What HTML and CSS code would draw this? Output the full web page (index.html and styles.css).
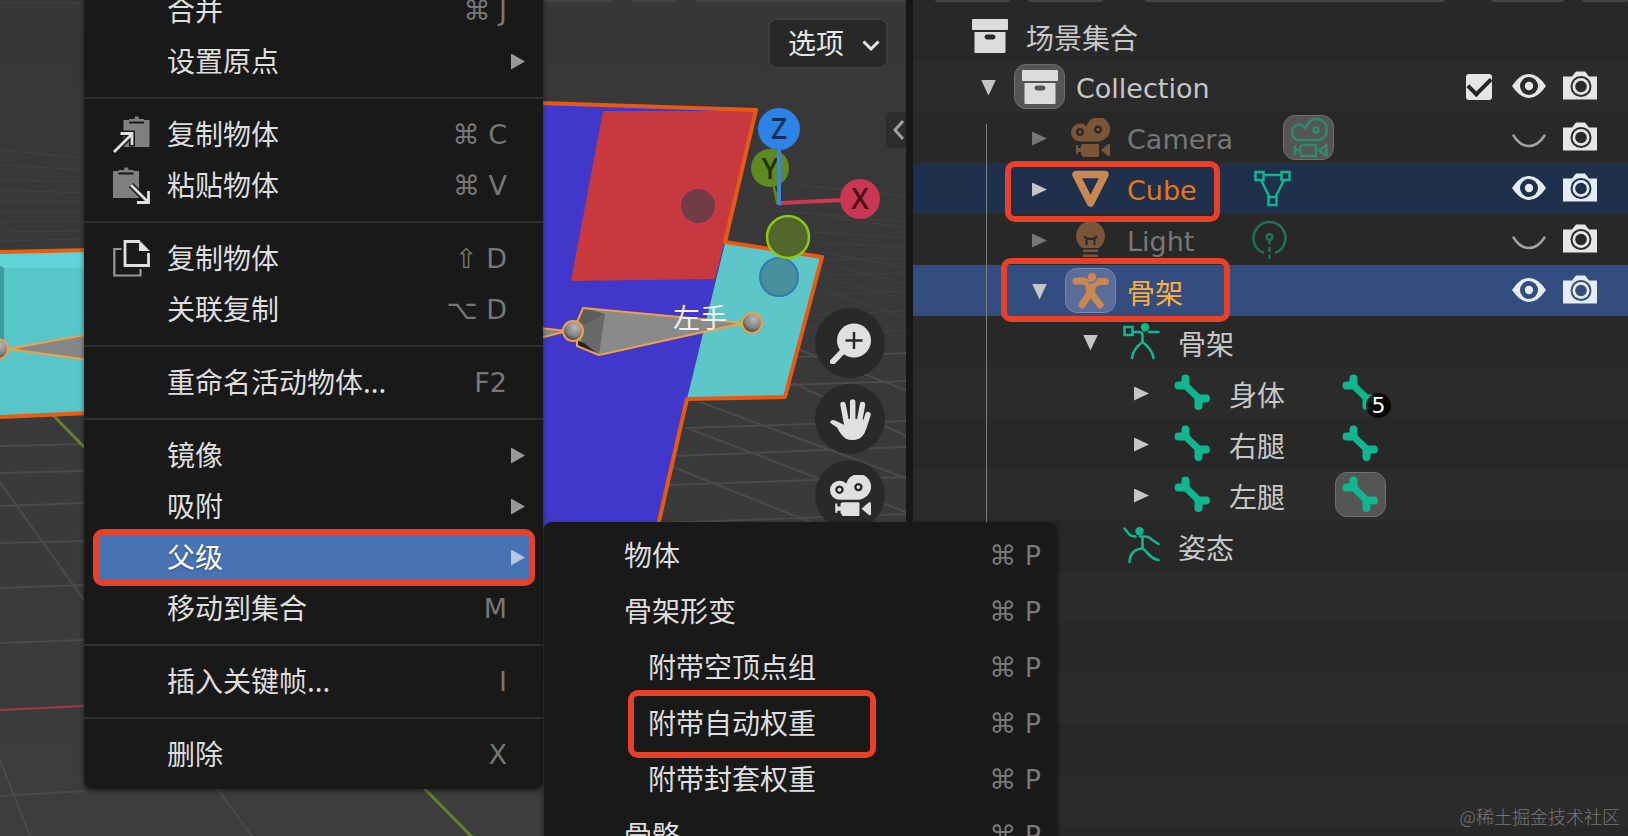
FILE: index.html
```html
<!DOCTYPE html>
<html lang="zh-CN">
<head>
<meta charset="utf-8">
<meta name="viewport" content="width=device-width, initial-scale=1">
<title>Blender</title>
<link rel="stylesheet" href="styles.css">
</head>
<body>
<svg class="sprite" aria-hidden="true">
  <symbol id="i-box" viewBox="0 0 36 34">
    <rect width="36" height="11" rx="1"/>
    <path fill-rule="evenodd" d="M2.500 13H33.500V33a1 1 0 0 1-1 1H3.500a1 1 0 0 1-1-1ZM15 15.500a2.400 2.400 0 0 0 0 5h6a2.400 2.400 0 0 0 0-5Z"/>
  </symbol>
  <symbol id="i-camera" viewBox="0 0 39 39">
    <path fill-rule="evenodd" d="M9 5.500a8.500 8.500 0 0 1 6.500 2.500A12 12 0 1 1 31 22.500Q29 23.500 27 23.500H9A9 9 0 0 1 9 5.500ZM9 10a4 4 0 1 0 .01 0ZM27 7.500a4 4 0 1 0 .01 0Z"/>
    <circle cx="9" cy="14" r="1.800"/><circle cx="27" cy="11.500" r="1.800"/>
    <path d="M12 26H27a1 1 0 0 1 1 1V38a1 1 0 0 1-1 1H12L10 36V34H7V36H5V27H7V30H10V27ZM30 32L37 26Q39 25.500 39 27V37Q39 39 37 38Z"/>
  </symbol>
  <symbol id="i-camera-line" viewBox="0 0 39 39">
    <g fill="none" stroke="currentColor" stroke-width="2.500" stroke-linejoin="round">
      <path d="M9 6.500Q13 6 16 10Q18 9 18 7A10.500 10.500 0 1 1 29 22H9A8 8 0 0 1 9 6.500Z"/>
      <circle cx="27" cy="12" r="2.500"/>
      <path d="M13 27H27V38H13L11 35V30ZM30 32.500L37.500 27V38ZM6 27V37M6 32H11"/>
      <path d="M9 15.500L11 13.500" stroke-width="1"/>
    </g>
  </symbol>
  <symbol id="i-mesh" viewBox="0 0 37 37">
    <path d="M4 4.500H33L18.500 33Z" fill="none" stroke="currentColor" stroke-width="7.500" stroke-linejoin="round"/>
  </symbol>
  <symbol id="i-mesh-line" viewBox="0 0 37 37">
    <g fill="none" stroke="currentColor" stroke-width="2.500">
      <path d="M1.500 2H9.500V10H1.500ZM27.500 2H35.500V10H27.500ZM14.500 27H22.500V35H14.500ZM10 5H27M7 10L15.500 27M30 10L21.500 27"/>
    </g>
  </symbol>
  <symbol id="i-bulb" viewBox="0 0 37 37">
    <path d="M18.500 0A15 15 0 0 1 27 27H10A15 15 0 0 1 18.500 0Z"/>
    <path d="M12 15Q14 18 18.500 18Q23 18 25 15M14.500 18V24M22.500 18V24" fill="none" stroke="var(--row)" stroke-width="2"/>
    <path d="M11 28.500H26V31H11ZM11 33.500H26V36H11Z"/>
  </symbol>
  <symbol id="i-light-line" viewBox="0 0 37 39">
    <g fill="none" stroke="currentColor" stroke-width="2.500">
      <path d="M13 33A16 16 0 1 1 24 33"/><circle cx="18.500" cy="17" r="2.800"/>
      <path d="M18.500 21V24M18.500 27V32M18.500 34.500V39"/>
    </g>
  </symbol>
  <symbol id="i-man" viewBox="0 0 37 37">
    <circle cx="20" cy="5" r="4.200"/>
    <g fill="none" stroke="currentColor" stroke-width="7" stroke-linecap="round" stroke-linejoin="round">
      <path d="M4 9H12L16 11M24.500 11L27 9.500H33.500M18.500 13V20L10 33M18.500 20L28 33"/>
    </g>
    <path d="M13 8L25 9L23 20H14Z"/>
    <path d="M16 10.500Q22 12 24.500 7" fill="none" stroke="#5e6f9e" stroke-width="1.500"/>
  </symbol>
  <symbol id="i-man-line" viewBox="0 0 37 37">
    <circle cx="22" cy="4.200" r="4.200"/>
    <g fill="none" stroke="currentColor" stroke-width="2.600" stroke-linecap="round">
      <path d="M1.500 4H9.500V12H1.500ZM10 9H17Q19.500 9.500 19.500 12V19Q10 26 9 35M19.500 19Q29 26 30.500 35M26 9H35.500"/>
    </g>
  </symbol>
  <symbol id="i-pose" viewBox="0 0 37 37">
    <circle cx="16.500" cy="4.200" r="4.200"/>
    <g fill="none" stroke="currentColor" stroke-width="2.600" stroke-linecap="round">
      <path d="M1.500 1.500L6 7Q8 9.500 12.500 9.500M17 9.500H22Q26 9.500 28 12L35.500 17M19.500 10V21M19.500 21.500C10 22 7 28 6.500 35M19.500 21.500C24 23 25 31 35.500 33"/>
    </g>
  </symbol>
  <symbol id="i-bone" viewBox="0 0 37 37">
    <g fill="none" stroke="currentColor" stroke-linecap="round">
      <path d="M11.500 4.500V10M4.500 11.500H10M24.500 32V26M32 24.500H26" stroke-width="8"/>
      <path d="M11 11L26 25.500" stroke-width="7"/>
    </g>
  </symbol>
  <symbol id="i-eye" viewBox="0 0 34 24">
    <path d="M0 12Q8 0 17 0T34 12Q26 24 17 24T0 12Z"/>
    <circle cx="17" cy="12" r="9" fill="var(--row)"/><circle cx="17" cy="12" r="4.200"/>
  </symbol>
  <symbol id="i-closed" viewBox="0 0 34 14">
    <path d="M1.500 1.500Q8 12 17 12T32.500 1.500" fill="none" stroke="#a2a2a2" stroke-width="2.500" stroke-linecap="round"/>
  </symbol>
  <symbol id="i-photo" viewBox="0 0 34 29">
    <path d="M0 5.500H9L13 .500H22L26 5.500H34V28.500H0Z"/>
    <circle cx="18" cy="15.500" r="10.500" fill="var(--row)"/><circle cx="18" cy="15.500" r="8.500"/>
    <circle cx="18" cy="15.500" r="5.800" fill="var(--row)"/>
  </symbol>
  <symbol id="i-copy" viewBox="0 0 37 37">
    <path d="M10.500 4H16V7.500H31V4H36.500V31H10.500ZM16 3H21.500L22 .500H25.500L26 3H31V5.500H16Z" fill="#808080"/>
    <path d="M1 36L18 19M6 17.500H19V30.500" fill="none" stroke="#191919" stroke-width="6"/>
    <path d="M1 36L18 19M7.500 17.500H19V29" fill="none" stroke="#e0e0e0" stroke-width="2.800"/>
  </symbol>
  <symbol id="i-paste" viewBox="0 0 37 37">
    <path d="M0 4H5.500V7.500H20.500V4H26V31H0ZM5.500 3H11L11.500 .500H15L15.500 3H20.500V5.500H5.500Z" fill="#808080"/>
    <path d="M18 18L35 35M22 35.500H35.500V22" fill="none" stroke="#191919" stroke-width="6"/>
    <path d="M18 18L35 35M24 35.500H35.500V24" fill="none" stroke="#e0e0e0" stroke-width="2.800"/>
  </symbol>
  <symbol id="i-dup" viewBox="0 0 37 37">
    <path d="M8.500 9H1.300V35.500H27.500V29" fill="none" stroke="#989898" stroke-width="2.200"/>
    <path d="M27 1.500H12V25.500H35.500V13" fill="none" stroke="#e0e0e0" stroke-width="2.800"/>
    <path d="M26 0L37 11H26Z" fill="#e0e0e0"/>
  </symbol>
  <symbol id="i-zoom" viewBox="0 0 41 41">
    <path d="M15 26L3 38.500" stroke="currentColor" stroke-width="6" stroke-linecap="round"/>
    <circle cx="24" cy="17.500" r="17"/>
    <path d="M24 9V26M15.500 17.500H32.500" stroke="#2a2a2a" stroke-width="2.500"/>
  </symbol>
  <symbol id="i-hand" viewBox="0 0 41 41">
    <path d="M13 5.500L16.500 24M22.700 3V24M32.500 5.500L29 25M38 15.500L34 28" stroke="currentColor" stroke-width="5.500" stroke-linecap="round"/>
    <path d="M14 20H32L37.500 23Q36 36 29.500 39.500Q22 42.500 15.500 39.500Q10 35 7.500 29L0 23.500Q1 20 5 21.500L14.500 26Z"/>
  </symbol>
</svg>

<main class="app">
  <section class="viewport" aria-label="3D 视图">
    <svg class="scene" width="906" height="836" viewBox="0 0 906 836" aria-hidden="true">
      <defs>
        <radialGradient id="ball" cx=".6" cy=".3" r=".75"><stop offset="0" stop-color="#b8b8b8"/><stop offset=".6" stop-color="#828282"/><stop offset="1" stop-color="#2e2e2e"/></radialGradient>
      </defs>
      <g stroke="#4b4b4b" stroke-width="2" fill="none">
        <path d="M0 446L84 444M0 473L84 471M0 506L84 503M0 543L84 541M0 588L84 585M0 643L84 640M0 796L84 791M0 482L84 600M0 760L30 836M210 779L252 836"/>
        <path d="M685 428L906 421M675 456L906 447M668 485L906 477M660 523L906 514M790 385L906 381M796 357L906 353M700 402L906 478M793 383L906 436M687 428L906 512M673 467L810 522M800 350L906 390"/>
      </g>
      <g stroke="#424242" stroke-width="1" fill="none">
        <path d="M0 150L84 158M0 165L84 170M0 180L84 182M0 190L84 193M0 202L84 202M0 212L84 212M0 222L84 221M0 232L84 231M0 241L84 239"/>
        <path d="M770 210L906 222M800 185L906 196M830 218L906 227M815 232L906 238M822 243L906 247M822 252L906 268M828 264L906 284M824 277L906 300M824 290L906 318M822 260L906 258M824 275L906 273M822 295L906 291M815 315L906 311M810 335L906 330M820 310L906 340M808 325L906 365"/>
      </g>
      <path d="M0 3H84" stroke="#444" stroke-width="1"/>
      <path d="M0 710L84 706" stroke="#a03b49" stroke-width="2"/>
      <path d="M52 414L88 451M420 784L475 840" stroke="#668032" stroke-width="3"/>

      <path d="M0 252L90 250V413L0 417Z" fill="#56c6c9"/>
      <path d="M0 252L90 250V268H4L0 265Z" fill="#5fd3d7"/>
      <path d="M0 266L4 268V340L0 345Z" fill="#3b9c9f"/>
      <path d="M0 252L90 250M0 417L90 413" stroke="#e85d12" stroke-width="4"/>
      <path d="M8 349L90 334V360Z" fill="#868686" stroke="#f0a045" stroke-width="2"/>
      <circle cx="-2" cy="349" r="10" fill="url(#ball)" stroke="#f0a045" stroke-width="2"/>

      <path d="M540 103L757 110L725 243L687 399L658 530H540Z" fill="#4138cb"/>
      <path d="M603 111H757L715 279L571 281Z" fill="#c8393f"/>
      <path d="M725 243L823 257L785 397L687 399Z" fill="#5cc6c9"/>
      <path d="M540 103L756 110L725 242L822 257L785 397L687 399L657 530" fill="none" stroke="#e85a14" stroke-width="4" stroke-linejoin="round"/>

      <path d="M540 328L567 331L540 338Z" fill="#868686" stroke="#f0a045" stroke-width="2"/>
      <path d="M583 308L744 323L599 355L576 343L572 332Z" fill="#8a8a8a"/>
      <path d="M583 308L605 314L599 355L582 343L578 325Z" fill="#696969"/>
      <path d="M583 308L605 314L586 324L578 322Z" fill="#5c5c5c"/>
      <path d="M576 340L584 343L599 355L580 348Z" fill="#242424"/>
      <path d="M577 322L583 308L744 323L599 355L577 346V340" fill="none" stroke="#f0a045" stroke-width="2" stroke-linejoin="round"/>
      <circle cx="573" cy="331" r="10" fill="url(#ball)" stroke="#f0a045" stroke-width="2"/>
      <circle cx="752" cy="323" r="10" fill="url(#ball)" stroke="#f0a045" stroke-width="2"/>
      <text class="bone-label" x="673" y="328">左手</text>

      <circle cx="698" cy="206" r="18" fill="#703d46" stroke="#c93a4c" stroke-width="2"/>
      <path d="M773 184L779 204L777 203Z" fill="#5c881f" stroke="#5c881f" stroke-width="2"/>
      <circle cx="770" cy="168" r="19" fill="#5f8a20"/>
      <text class="axis axis-y" x="770" y="179">Y</text>
      <path d="M779 150V205" stroke="#3a87d8" stroke-width="4"/>
      <circle cx="779" cy="129" r="21" fill="#2d83e6"/>
      <text class="axis axis-z" x="779" y="139">Z</text>
      <path d="M781 203L842 200" stroke="#cb3a52" stroke-width="4"/>
      <circle cx="860" cy="199" r="20" fill="#cb3650"/>
      <text class="axis axis-x" x="860" y="209">X</text>
      <circle cx="779" cy="277" r="19" fill="#498f9d" stroke="#3079b2" stroke-width="2"/>
      <circle cx="788" cy="237" r="21" fill="#53672c" stroke="#8acb12" stroke-width="2.500"/>
    </svg>
    <div class="view-header"><i class="stub wide"></i><i class="stub small"></i><i class="stub rest"></i></div>
    <button class="options" type="button">选项<svg width="18" height="12" viewBox="0 0 18 12" aria-hidden="true"><path d="M1.500 1.500L9 9L16.500 1.500" fill="none" stroke="#e6e6e6" stroke-width="3"/></svg></button>
    <button class="side-tab" type="button" aria-label="展开侧栏"><svg width="11" height="20" viewBox="0 0 11 20" aria-hidden="true"><path d="M10 1L2 10L10 19" fill="none" stroke="#a0a0a0" stroke-width="3"/></svg></button>
    <nav class="nav-tools" aria-label="视图导航">
      <button type="button" aria-label="缩放"><svg><use href="#i-zoom"/></svg></button>
      <button type="button" aria-label="平移"><svg><use href="#i-hand"/></svg></button>
      <button type="button" aria-label="摄像机视图"><svg><use href="#i-camera"/></svg></button>
    </nav>
  </section>

  <div class="divider"></div>

  <aside class="outliner" aria-label="大纲视图">
    <div class="out-header"><i class="stub a"></i><i class="stub a"></i><i class="stub b"></i><i class="stub c"></i><i class="stub d"></i></div>
    <ul class="tree">
      <li class="row l0"><span class="toggle"></span><span class="icon white"><svg class="archive"><use href="#i-box"/></svg></span><span class="name">场景集合</span></li>
      <li class="row light l1"><button class="toggle open" type="button" aria-label="折叠"></button><span class="icon white chip"><svg class="archive"><use href="#i-box"/></svg></span><span class="name latin">Collection</span>
        <span class="cols"><input type="checkbox" checked aria-label="启用集合"><button type="button" aria-label="隐藏"><svg class="eye"><use href="#i-eye"/></svg></button><button type="button" aria-label="渲染"><svg class="photo"><use href="#i-photo"/></svg></button></span></li>
      <li class="row l2 dim"><button class="toggle" type="button" aria-label="展开"></button><span class="icon orange"><svg class="cam"><use href="#i-camera"/></svg></span><span class="name latin">Camera</span><span class="icon data green chip"><svg class="cam"><use href="#i-camera-line"/></svg></span>
        <span class="cols"><button type="button" aria-label="显示"><svg class="closed"><use href="#i-closed"/></svg></button><button type="button" aria-label="渲染"><svg class="photo"><use href="#i-photo"/></svg></button></span></li>
      <li class="row l2 selected"><button class="toggle" type="button" aria-label="展开"></button><span class="icon orange"><svg><use href="#i-mesh"/></svg></span><span class="name latin">Cube</span><span class="icon data green"><svg><use href="#i-mesh-line"/></svg></span>
        <span class="cols"><button type="button" aria-label="隐藏"><svg class="eye"><use href="#i-eye"/></svg></button><button type="button" aria-label="渲染"><svg class="photo"><use href="#i-photo"/></svg></button></span><i class="mark mark-cube"></i></li>
      <li class="row l2 dim"><button class="toggle" type="button" aria-label="展开"></button><span class="icon orange"><svg><use href="#i-bulb"/></svg></span><span class="name latin">Light</span><span class="icon data green"><svg class="cam"><use href="#i-light-line"/></svg></span>
        <span class="cols"><button type="button" aria-label="显示"><svg class="closed"><use href="#i-closed"/></svg></button><button type="button" aria-label="渲染"><svg class="photo"><use href="#i-photo"/></svg></button></span></li>
      <li class="row l2 active"><button class="toggle open" type="button" aria-label="折叠"></button><span class="icon orange chip"><svg><use href="#i-man"/></svg></span><span class="name">骨架</span>
        <span class="cols"><button type="button" aria-label="隐藏"><svg class="eye"><use href="#i-eye"/></svg></button><button type="button" aria-label="渲染"><svg class="photo"><use href="#i-photo"/></svg></button></span><i class="mark mark-rig"></i></li>
      <li class="row l3"><button class="toggle open" type="button" aria-label="折叠"></button><span class="icon green"><svg><use href="#i-man-line"/></svg></span><span class="name">骨架</span></li>
      <li class="row light l4"><button class="toggle" type="button" aria-label="展开"></button><span class="icon green"><svg><use href="#i-bone"/></svg></span><span class="name">身体</span><span class="icon data green"><svg><use href="#i-bone"/></svg><b class="count">5</b></span></li>
      <li class="row l4"><button class="toggle" type="button" aria-label="展开"></button><span class="icon green"><svg><use href="#i-bone"/></svg></span><span class="name">右腿</span><span class="icon data green"><svg><use href="#i-bone"/></svg></span></li>
      <li class="row light l4"><button class="toggle" type="button" aria-label="展开"></button><span class="icon green"><svg><use href="#i-bone"/></svg></span><span class="name">左腿</span><span class="icon data green chip"><svg><use href="#i-bone"/></svg></span></li>
      <li class="row l3"><span class="toggle"></span><span class="icon green"><svg><use href="#i-pose"/></svg></span><span class="name">姿态</span></li>
    </ul>
    <div class="watermark">@稀土掘金技术社区</div>
  </aside>

  <div class="menu main-menu">
    <button type="button"><span>合并</span><kbd>⌘ J</kbd></button>
    <button type="button"><span>设置原点</span><i class="more"></i></button>
    <hr>
    <button type="button"><svg><use href="#i-copy"/></svg><span>复制物体</span><kbd>⌘ C</kbd></button>
    <button type="button"><svg><use href="#i-paste"/></svg><span>粘贴物体</span><kbd>⌘ V</kbd></button>
    <hr>
    <button type="button"><svg><use href="#i-dup"/></svg><span>复制物体</span><kbd>⇧ D</kbd></button>
    <button type="button"><span>关联复制</span><kbd>⌥ D</kbd></button>
    <hr>
    <button type="button"><span>重命名活动物体...</span><kbd>F2</kbd></button>
    <hr>
    <button type="button"><span>镜像</span><i class="more"></i></button>
    <button type="button"><span>吸附</span><i class="more"></i></button>
    <button type="button" class="current"><span>父级</span><i class="more"></i></button>
    <button type="button"><span>移动到集合</span><kbd>M</kbd></button>
    <hr>
    <button type="button"><span>插入关键帧...</span><kbd>I</kbd></button>
    <hr>
    <button type="button"><span>删除</span><kbd>X</kbd></button>
  </div>

  <div class="menu sub-menu">
    <button type="button"><span>物体</span><kbd>⌘ P</kbd></button>
    <button type="button"><span>骨架形变</span><kbd>⌘ P</kbd></button>
    <button type="button" class="nested"><span>附带空顶点组</span><kbd>⌘ P</kbd></button>
    <button type="button" class="nested"><span>附带自动权重</span><kbd>⌘ P</kbd><i class="mark mark-auto"></i></button>
    <button type="button" class="nested"><span>附带封套权重</span><kbd>⌘ P</kbd></button>
    <button type="button"><span>骨骼</span><kbd>⌘ P</kbd></button>
  </div>
</main>
</body>
</html>
```

FILE: styles.css
```css
* { box-sizing: border-box; }

body {
  margin: 0;
  background: #282828;
  color: #dedede;
  font: 28px/1 "Noto Sans CJK SC", sans-serif;
}

button {
  margin: 0;
  padding: 0;
  border: 0;
  background: none;
  color: inherit;
  font: inherit;
}

svg { display: block; fill: currentColor; flex: none; }
.sprite { position: absolute; width: 0; height: 0; }

.app {
  position: relative;
  display: grid;
  grid-template-columns: minmax(0, 906fr) 7px minmax(0, 715fr);
  height: 100vh;
  overflow: hidden;
}

.divider { background: #171717; }

/* 3D view */
.viewport {
  position: relative;
  overflow: hidden;
  background: linear-gradient(#373737 0, #383838 100px, #393939 400px, #3d3d3d 100%);
}
.scene { position: absolute; top: 0; left: 0; }
.bone-label { fill: #f2f2f2; font-size: 27px; }
.axis { font: 600 28px "Open Sans", sans-serif; text-anchor: middle; }
.axis-x { fill: #4a1019; }
.axis-y { fill: #1f3305; }
.axis-z { fill: #0c305c; }

.stub { height: 2px; background: #454545; border-radius: 0 0 4px 4px; }
.view-header { position: relative; display: flex; gap: 20px; padding-left: 540px; }
.view-header .wide { width: 72px; }
.view-header .small { width: 44px; }
.view-header .rest { flex: 1; }

.options {
  position: absolute;
  top: 18px;
  right: 18px;
  display: flex;
  align-items: center;
  gap: 18px;
  height: 51px;
  padding: 0 6px 4px 18px;
  border: 2px solid #3e3e3e;
  border-radius: 9px;
  background: #282828;
  color: #e6e6e6;
}
.options svg { margin-top: 8px; }

.side-tab {
  position: absolute;
  top: 112px;
  right: 0;
  display: grid;
  place-items: center;
  width: 20px;
  height: 36px;
  padding-left: 4px;
  border-radius: 5px 0 0 5px;
  background: #2d2d2d;
}

.nav-tools {
  position: absolute;
  top: 308px;
  right: 21px;
  display: grid;
  gap: 6px;
}
.nav-tools button {
  display: grid;
  place-items: center;
  width: 70px;
  height: 70px;
  border-radius: 50%;
  background: #292929;
  color: #e0e0e0;
}
.nav-tools svg { width: 41px; height: 41px; }

/* Outliner */
.outliner { position: relative; display: flex; flex-direction: column; overflow: hidden; }
.out-header { display: flex; gap: 18px; height: 10px; padding-left: 22px; }
.out-header .a { width: 75px; }
.out-header .b { flex: 1; margin-left: 24px; }
.out-header .c { width: 73px; margin-left: 28px; }
.out-header .d { width: 46px; }

.tree {
  position: relative;
  flex: 1;
  margin: 0;
  padding: 0;
  list-style: none;
  background: repeating-linear-gradient(#282828 0 51px, #2b2b2b 51px 102px);
}
.tree::after {
  content: "";
  position: absolute;
  top: 114px;
  left: 73px;
  width: 1px;
  height: 400px;
  background: #808080;
}

.row {
  --row: #282828;
  position: relative;
  display: flex;
  align-items: center;
  height: 51px;
  color: #c8c8c8;
}
.row.light { --row: #2b2b2b; }
.l0 { padding-left: 0; }
.l1 { padding-left: 50px; }
.l2 { padding-left: 101px; }
.l3 { padding-left: 152px; }
.l4 { padding-left: 203px; }
.selected { --row: #1e304c; background: var(--row); }
.active { --row: #334d80; background: var(--row); }

.toggle, .icon { display: grid; place-items: center; flex: none; width: 51px; }
.toggle { padding-top: 2px; }
button.toggle::before {
  content: "";
  width: 15px;
  height: 14px;
  background: #c6c6c6;
  clip-path: polygon(0 0, 100% 50%, 0 100%);
}
button.toggle.open::before { height: 16px; clip-path: polygon(0 0, 100% 0, 50% 100%); }
.dim button.toggle::before { background: #777; }

.icon { position: relative; height: 45px; border: 1px solid transparent; border-radius: 12px; }
.icon svg { width: 37px; height: 37px; }
.icon .archive { width: 36px; height: 34px; }
.icon .cam { width: 39px; height: 39px; }
.chip { border-color: #707070; background: #555; }
.active .chip { border-color: #7688ad; background: #5a6d98; }
.white { color: #dcdcdc; }
.orange { color: #c98754; }
.green { color: #10b690; }
.dim .orange { color: #7b5537; }
.dim .green { color: #1f7259; }
.dim .chip.green { color: #2f8a70; }
.data { margin-left: 50px; }

.name { padding: 3px 0 0 11px; white-space: nowrap; line-height: 32px; }
.latin { padding-top: 5px; font-family: "DejaVu Sans", sans-serif; font-size: 27px; }
.dim .name { color: #777; }
.selected .name { color: #ea7713; }
.active .name { color: #ffaf3c; }

.count {
  position: absolute;
  right: -6px;
  bottom: -4px;
  width: 25px;
  height: 25px;
  border-radius: 50%;
  background: rgba(0, 0, 0, .8);
  color: #fff;
  font: 22px/25px "DejaVu Sans", sans-serif;
  text-align: center;
}

.cols { display: flex; align-items: center; margin-left: auto; padding-right: 23px; color: #e6e6e6; }
.cols button { display: grid; place-items: center; width: 51px; height: 51px; padding-bottom: 2px; }
.selected .cols, .active .cols { color: #e6ecf6; }
.eye { width: 34px; height: 24px; }
.closed { width: 34px; height: 14px; margin-top: 8px; }
.photo { width: 34px; height: 29px; }
.cols input {
  appearance: none;
  display: grid;
  place-items: center;
  width: 26px;
  height: 26px;
  margin: 0 11px 0 0;
  border-radius: 3px;
  background: #e6e6e6;
}
.cols input:checked::before {
  content: "";
  width: 19px;
  height: 10px;
  margin-top: -5px;
  border: solid #252525;
  border-width: 0 0 4px 4px;
  transform: rotate(-45deg);
}

.watermark {
  position: absolute;
  right: 8px;
  bottom: 10px;
  color: #777;
  font-size: 18px;
  font-weight: 300;
  line-height: 20px;
}

/* Highlight frames */
.mark { position: absolute; z-index: 2; border: 6px solid #e8412a; border-radius: 10px; pointer-events: none; }
.mark-cube { top: -2px; left: 92px; width: 215px; height: 61px; }
.mark-rig { top: -7px; left: 88px; width: 229px; height: 64px; }
.mark-auto { top: -6px; left: 84px; width: 248px; height: 68px; }

/* Menus */
.menu {
  position: absolute;
  background: #191919;
  box-shadow: 0 2px 5px rgba(0, 0, 0, .5);
}
.menu button { position: relative; display: flex; align-items: center; width: 100%; text-align: left; }
.menu span { padding-bottom: 4px; line-height: 32px; white-space: nowrap; }
.menu kbd { margin-left: auto; color: #777; font: 27px/32px "DejaVu Sans", sans-serif; }

.main-menu { top: -15px; left: 84px; width: 459px; padding-bottom: 9px; border-radius: 0 0 8px 8px; z-index: 1; }
.main-menu button { height: 51px; padding: 0 36px 0 83px; }
.main-menu button svg { width: 37px; height: 37px; margin: 0 17px 0 -54px; }
.main-menu hr { height: 2px; margin: 10px 0; border: 0; background: #303030; }
.more { width: 14px; height: 16px; margin: 0 -18px 0 auto; background: #999; clip-path: polygon(0 0, 100% 50%, 0 100%); }
.main-menu .current { color: #fff; }
.current::before {
  content: "";
  position: absolute;
  inset: -3px 8px -3px 9px;
  border: 6px solid #e8412a;
  border-radius: 10px;
  background: #4772b3;
}
.current span { position: relative; text-shadow: 0 1px 2px rgba(0, 0, 0, .4); }
.current .more { position: relative; background: #b5c7e1; }

.sub-menu { top: 522px; left: 544px; width: 513px; padding-top: 6px; border-radius: 8px 8px 0 0; z-index: 2; }
.sub-menu button { height: 56px; padding: 0 16px 0 80px; }
.sub-menu .nested { padding-left: 104px; }
```
